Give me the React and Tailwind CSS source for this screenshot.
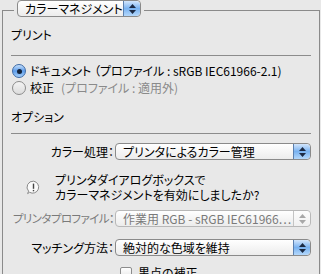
import React from 'react';

const Arrows = ({ disabled }) => (
  <div
    className={`flex w-[17px] flex-col items-center justify-center gap-[2px] rounded-r-[4px] border-l ${
      disabled
        ? 'border-[#c4c4c4] bg-gradient-to-b from-[#fdfdfd] to-[#f0f0f0]'
        : 'border-[#5b7fae] bg-gradient-to-b from-[#d3e6fc] via-[#79b2f0] to-[#b4d8fb]'
    }`}
  >
    <svg width="7" height="4" viewBox="0 0 7 4">
      <path d="M3.5 0 L7 4 L0 4 Z" fill={disabled ? '#a8a8a8' : '#1b2a44'} />
    </svg>
    <svg width="7" height="4" viewBox="0 0 7 4">
      <path d="M0 0 L7 0 L3.5 4 Z" fill={disabled ? '#a8a8a8' : '#1b2a44'} />
    </svg>
  </div>
);

const Popup = ({ label, disabled, className = '' }) => (
  <div
    className={`flex h-[17px] overflow-hidden rounded-[4px] border ${
      disabled ? 'border-[#b8b8b8]' : 'border-[#8a8a8a]'
    } bg-gradient-to-b from-white to-[#ececec] ${className}`}
  >
    <div
      className={`flex flex-1 items-center overflow-hidden whitespace-nowrap pl-[7px] text-[12px] leading-none ${
        disabled ? 'text-[#7a7a7a]' : 'text-black'
      }`}
    >
      {label}
    </div>
    <Arrows disabled={disabled} />
  </div>
);

const Radio = ({ checked }) =>
  checked ? (
    <div className="flex h-[14px] w-[14px] items-center justify-center rounded-full border border-[#3d6aa6] bg-gradient-to-b from-[#c7e0fb] via-[#5d9ce9] to-[#a6d0fa]">
      <div className="h-[5px] w-[5px] rounded-full bg-[#14243c]" />
    </div>
  ) : (
    <div className="h-[14px] w-[14px] rounded-full border border-[#8c8c8c] bg-gradient-to-b from-[#f4f4f4] to-[#dcdcdc]" />
  );

const Row = ({ label, labelGray, children, className = '' }) => (
  <div className={`flex items-center ${className}`}>
    <div className="flex w-[103px] justify-end">
      <span
        className={`whitespace-nowrap leading-none ${
          labelGray ? 'text-[11.5px] tracking-[-0.6px] text-[#7a7a7a]' : 'text-[12px] text-black'
        }`}
      >
        {label}
      </span>
    </div>
    <div className="ml-[1px] flex-1">{children}</div>
  </div>
);

export default function App() {
  return (
    <div className="relative h-[274px] w-[321px] overflow-hidden bg-[#e8e8e8] font-['Noto_Sans_CJK_JP',sans-serif] [font-feature-settings:'palt'] text-black">
      {/* group box */}
      <div className="ml-[2px] mt-[10px] h-[300px] w-[318px] border border-[#8a8a8a] pl-[8px] pr-[8px] pt-[1px]">
        <div className="mt-[15px] h-[16px] text-[12px] leading-[16px]">プリント</div>
        <div className="mt-[12px] h-px bg-[#8c8c8c]" />

        <div className="ml-[1px] mt-[7px] flex h-[16px] items-center gap-[4px] text-[12px] leading-none">
          <Radio checked />
          <span className="whitespace-nowrap">ドキュメント （プロファイル : sRGB IEC61966-2.1)</span>
        </div>
        <div className="ml-[1px] mt-[1px] flex h-[16px] items-center gap-[4px] text-[12px] leading-none">
          <Radio />
          <span>校正</span>
          <span className="ml-[3px] text-[#8a8a8a]">(プロファイル : 適用外)</span>
        </div>

        <div className="mt-[13px] h-[16px] text-[12px] leading-[16px]">オプション</div>
        <div className="mt-[8px] h-px bg-[#8c8c8c]" />

        <Row label="カラー処理：" className="mt-[9px]">
          <Popup label="プリンタによるカラー管理" />
        </Row>

        <div className="mt-[12px] flex items-center">
          <div className="flex w-[44px] justify-center">
            <svg width="15" height="15" viewBox="0 0 15 15">
              <path
                d="M7.5 1.2 A6 6 0 1 1 3.6 12.3 L1.6 13.6 L2.6 11.2 A6 6 0 0 1 7.5 1.2 Z"
                fill="#fbfbfb"
                stroke="#8a8a8a"
                strokeWidth="1"
              />
              <rect x="6.8" y="3.6" width="1.4" height="5.2" fill="#444" />
              <rect x="6.8" y="9.9" width="1.4" height="1.4" fill="#444" />
            </svg>
          </div>
          <div className="text-[12px] leading-[15px]">
            <div>プリンタダイアログボックスで</div>
            <div>カラーマネジメントを有効にしましたか?</div>
          </div>
        </div>

        <Row label="プリンタプロファイル：" labelGray className="mt-[8px]">
          <Popup label="作業用 RGB - sRGB IEC61966…" disabled />
        </Row>

        <Row label="マッチング方法：" className="mt-[12px]">
          <Popup label="絶対的な色域を維持" />
        </Row>

        <div className="ml-[109px] mt-[11px] flex items-center gap-[6px] text-[12px] leading-none">
          <div className="h-[12px] w-[12px] rounded-[2px] border border-[#8c8c8c] bg-gradient-to-b from-white to-[#e6e6e6]" />
          <span>黒点の補正</span>
        </div>
      </div>

      {/* top popup over the frame */}
      <div className="absolute left-[14px] top-0 w-[130px] bg-[#e8e8e8] px-[3px]">
        <Popup label="カラーマネジメント" />
      </div>
    </div>
  );
}
